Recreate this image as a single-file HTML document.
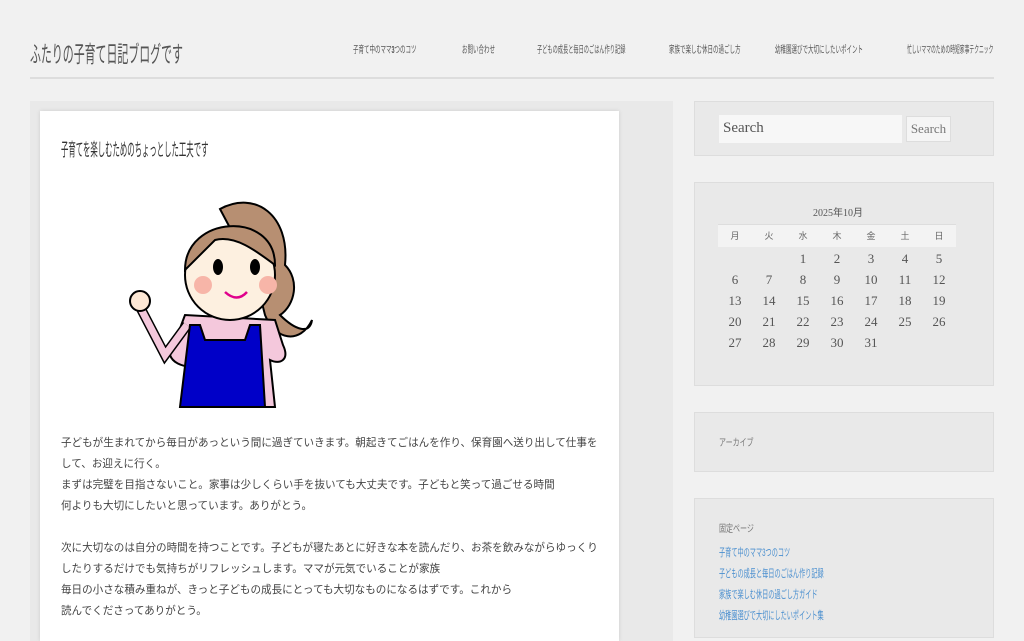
<!DOCTYPE html>
<html><head><meta charset="utf-8"><style>
*{margin:0;padding:0;box-sizing:border-box}
body{width:1024px;height:629px;overflow:hidden;background:#f1f1f1;font-family:"Liberation Sans","Noto Sans CJK JP",sans-serif;color:#444;position:relative}
.title{position:absolute;left:30px;top:35px;font-size:23px;color:#555;transform:scaleX(.475);transform-origin:0 0;white-space:nowrap}
.nav{position:absolute;top:41px;font-size:10px;color:#555;white-space:nowrap;transform:scaleX(.55);transform-origin:0 0}
.hline{position:absolute;left:30px;top:77px;width:964px;height:2px;background:#ddd}
.main{position:absolute;left:30px;top:101px;width:643px;height:540px;background:#e9e9e9}
.card{position:absolute;left:40px;top:111px;width:579px;height:530px;background:#fff;box-shadow:0 0 4px rgba(0,0,0,.12)}
.card h1{position:absolute;left:21px;top:25px;font-size:18px;font-weight:normal;color:#333;transform:scaleX(.41);transform-origin:0 0;white-space:nowrap}
.txt{position:absolute;left:21px;top:322px;font-size:11px;line-height:21px;color:#444}
.txt div{height:21px;white-space:nowrap;transform:scaleX(.96);transform-origin:0 0}
.box{position:absolute;left:694px;width:300px;background:#e9e9e9;border:1px solid #ddd}
.s{position:absolute;left:24px;top:13px;width:183px;height:28px;background:#f7f7f7;font-family:"Liberation Serif",serif;font-size:15px;color:#555;padding:5px 4px}
.sb{position:absolute;left:211px;top:14px;width:45px;height:26px;background:#f5f5f5;border:1px solid #ddd;font-family:"Liberation Serif",serif;font-size:13px;color:#777;text-align:center;line-height:24px}
table{position:absolute;left:23px;top:41px;border-collapse:collapse;font-family:"Liberation Serif",serif;font-size:13px;color:#555}
td,th{width:34px;height:21px;text-align:center;font-weight:normal}
th{background:#f3f3f3;font-size:9px;border-top:1px solid #ddd;height:22px;color:#666}
tr:nth-child(2) td{padding-top:2px;height:23px}
.link{color:#4a8fcf;font-size:11px;line-height:21px;white-space:nowrap;transform:scaleX(.56);transform-origin:0 0}
</style></head><body>
<div class="title">ふたりの子育て日記ブログです</div>
<div class="nav" style="left:353px">子育て中のママ<b>3</b>つのコツ</div>
<div class="nav" style="left:462px">お問い合わせ</div>
<div class="nav" style="left:537px;transform:scaleX(.52)">子どもの成長と毎日のごはん作り記録</div>
<div class="nav" style="left:669px">家族で楽しむ休日の過ごし方</div>
<div class="nav" style="left:775px">幼稚園選びで大切にしたいポイント</div>
<div class="nav" style="left:907px;transform:scaleX(.48)">忙しいママのための時短家事テクニック</div>
<div class="hline"></div>
<div class="main"></div>
<div class="card">
<h1>子育てを楽しむためのちょっとした工夫です</h1>
<svg style="position:absolute;left:85px;top:84px" width="190" height="214" viewBox="0 0 190 214">
<path d="M95 14 C130 -5 165 20 160 70 C175 85 170 110 155 120 C170 135 185 140 187 125 C175 150 150 145 140 120 L130 80 Z" fill="#b78f72" stroke="#000" stroke-width="2"/>
<path d="M60 120 L45 160 C50 175 80 175 95 165 L100 212 L150 212 L145 165 C155 170 165 165 158 150 L150 125 Z" fill="#f4c8dc" stroke="#000" stroke-width="2"/>
<path d="M62 130 L40 160 L15 112" fill="none" stroke="#000" stroke-width="10"/>
<path d="M62 130 L40 160 L15 112" fill="none" stroke="#f4c8dc" stroke-width="7"/>
<circle cx="15" cy="106" r="10" fill="#fde8d5" stroke="#000" stroke-width="2"/>
<path d="M65 130 L75 130 L80 145 L120 145 L125 130 L135 130 L140 212 L55 212 Z" fill="#0000c8" stroke="#000" stroke-width="2"/>
<ellipse cx="105" cy="80" rx="45" ry="45" fill="#fdf0e0" stroke="#000" stroke-width="2"/>
<path d="M60 75 C60 20 150 15 150 70 C130 55 110 40 90 45 C80 55 70 65 60 75Z" fill="#b78f72" stroke="#000" stroke-width="2"/>
<ellipse cx="93" cy="72" rx="5" ry="8"/><ellipse cx="130" cy="72" rx="5" ry="8"/>
<circle cx="78" cy="90" r="9" fill="#f7b5a8"/><circle cx="143" cy="90" r="9" fill="#f7b5a8"/>
<path d="M100 97 Q112 108 122 97" fill="none" stroke="#e0008c" stroke-width="2.5"/>
</svg>
<div class="txt">
<div>子どもが生まれてから毎日があっという間に過ぎていきます。朝起きてごはんを作り、保育園へ送り出して仕事を</div>
<div>して、お迎えに行く。</div>
<div>まずは完璧を目指さないこと。家事は少しくらい手を抜いても大丈夫です。子どもと笑って過ごせる時間</div>
<div>何よりも大切にしたいと思っています。ありがとう。</div>
<div>&nbsp;</div>
<div>次に大切なのは自分の時間を持つことです。子どもが寝たあとに好きな本を読んだり、お茶を飲みながらゆっくり</div>
<div>したりするだけでも気持ちがリフレッシュします。ママが元気でいることが家族</div>
<div>毎日の小さな積み重ねが、きっと子どもの成長にとっても大切なものになるはずです。これから</div>
<div>読んでくださってありがとう。</div>
</div>
</div>
<div class="box" style="top:101px;height:55px"><div class="s">Search</div><div class="sb">Search</div></div>
<div class="box" style="top:182px;height:204px">
<div style="position:absolute;left:0;width:286px;top:21px;text-align:center;font-family:'Liberation Serif',serif;font-size:10px;color:#555">2025年10月</div>
<table><tr><th>月</th><th>火</th><th>水</th><th>木</th><th>金</th><th>土</th><th>日</th></tr>
<tr><td></td><td></td><td>1</td><td>2</td><td>3</td><td>4</td><td>5</td></tr>
<tr><td>6</td><td>7</td><td>8</td><td>9</td><td>10</td><td>11</td><td>12</td></tr>
<tr><td>13</td><td>14</td><td>15</td><td>16</td><td>17</td><td>18</td><td>19</td></tr>
<tr><td>20</td><td>21</td><td>22</td><td>23</td><td>24</td><td>25</td><td>26</td></tr>
<tr><td>27</td><td>28</td><td>29</td><td>30</td><td>31</td><td></td><td></td></tr></table>
</div>
<div class="box" style="top:412px;height:60px"><div style="position:absolute;left:24px;top:21px;font-size:10px;color:#777;white-space:nowrap;transform:scaleX(.7);transform-origin:0 0">アーカイブ</div></div>
<div class="box" style="top:498px;height:140px"><div style="position:absolute;left:24px;top:21px;font-size:10px;color:#777;white-space:nowrap;transform:scaleX(.7);transform-origin:0 0">固定ページ</div>
<div style="position:absolute;left:24px;top:44px" class="link">子育て中のママ3つのコツ<br>子どもの成長と毎日のごはん作り記録<br>家族で楽しむ休日の過ごし方ガイド<br>幼稚園選びで大切にしたいポイント集</div></div>
</body></html>
